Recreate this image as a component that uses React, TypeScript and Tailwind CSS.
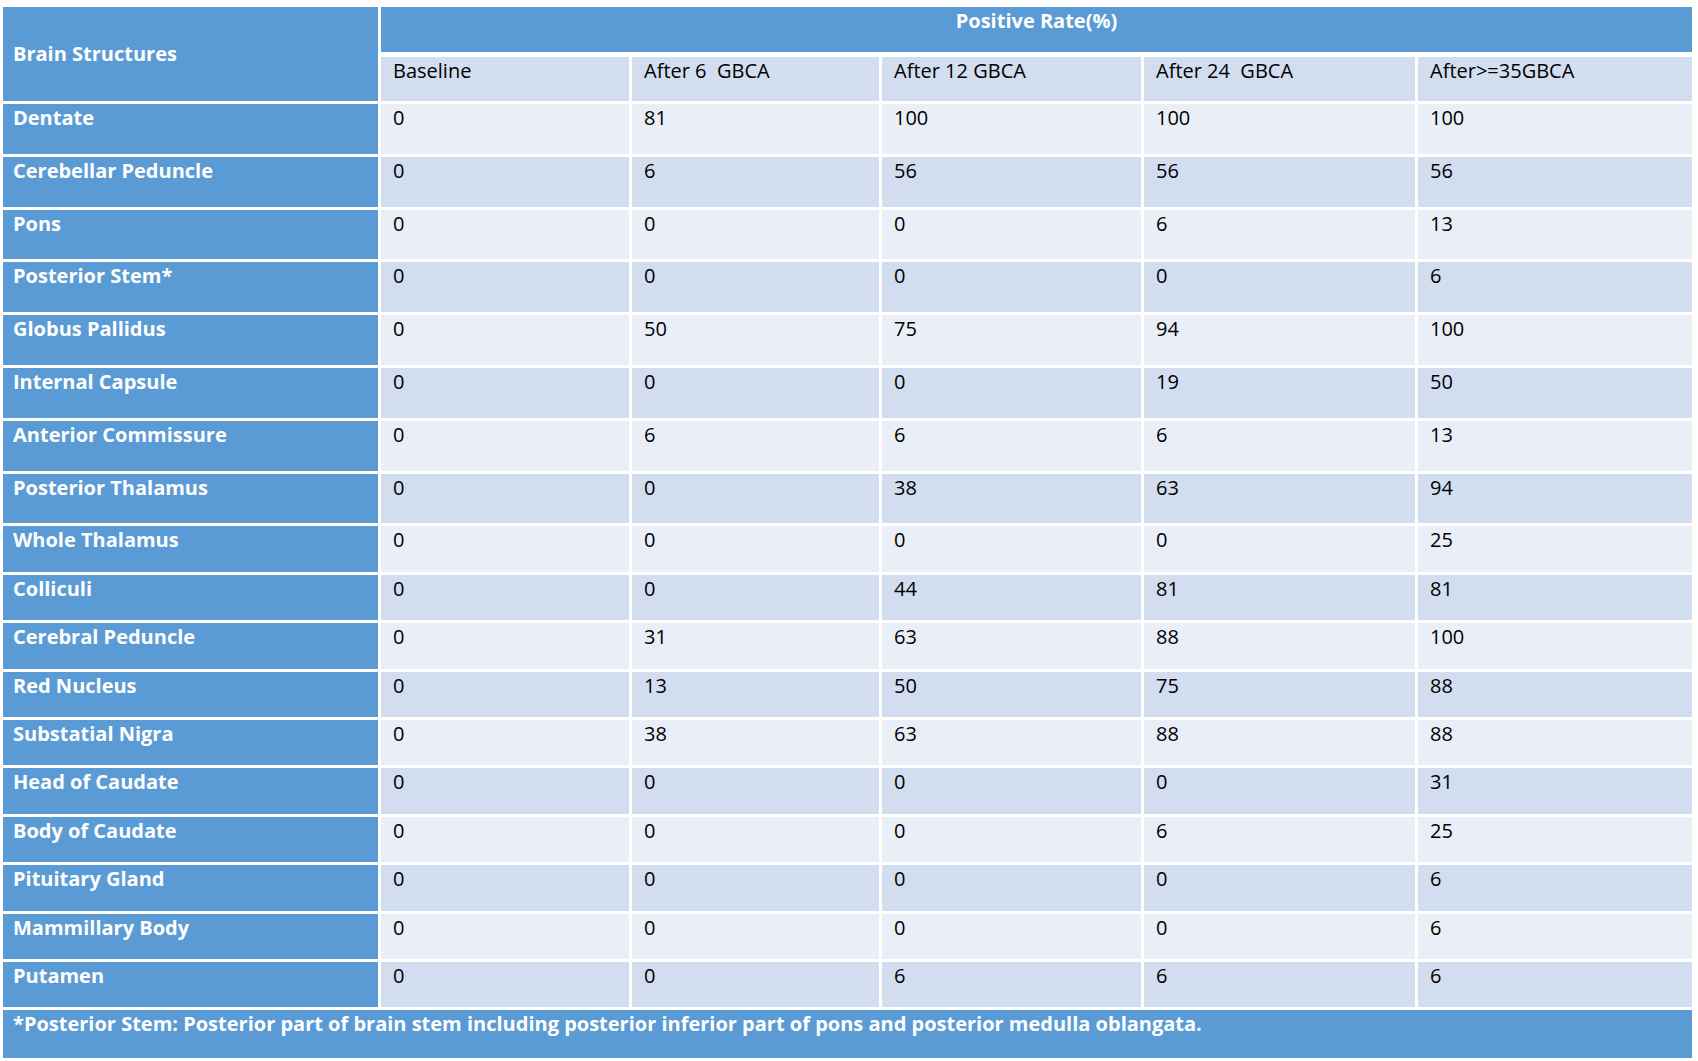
import React from 'react';

const rows: [string, string, string, string, string, string][] = [
  ['Dentate', '0', '81', '100', '100', '100'],
  ['Cerebellar Peduncle', '0', '6', '56', '56', '56'],
  ['Pons', '0', '0', '0', '6', '13'],
  ['Posterior Stem*', '0', '0', '0', '0', '6'],
  ['Globus Pallidus', '0', '50', '75', '94', '100'],
  ['Internal Capsule', '0', '0', '0', '19', '50'],
  ['Anterior Commissure', '0', '6', '6', '6', '13'],
  ['Posterior Thalamus', '0', '0', '38', '63', '94'],
  ['Whole Thalamus', '0', '0', '0', '0', '25'],
  ['Colliculi', '0', '0', '44', '81', '81'],
  ['Cerebral Peduncle', '0', '31', '63', '88', '100'],
  ['Red Nucleus', '0', '13', '50', '75', '88'],
  ['Substatial Nigra', '0', '38', '63', '88', '88'],
  ['Head of Caudate', '0', '0', '0', '0', '31'],
  ['Body of Caudate', '0', '0', '0', '6', '25'],
  ['Pituitary Gland', '0', '0', '0', '0', '6'],
  ['Mammillary Body', '0', '0', '0', '0', '6'],
  ['Putamen', '0', '0', '6', '6', '6'],
];

const columns = ['Baseline', 'After 6\u00a0 GBCA', 'After 12 GBCA', 'After 24\u00a0 GBCA', 'After>=35GBCA'];

const App: React.FC = () => {
  return (
    <div className="min-h-screen bg-white pt-[7px] pl-[3px] font-['Open_Sans',sans-serif] text-[20px] leading-[26px]">
      <div className="w-[1689px] flex flex-col gap-y-[3px]">
        {/* header */}
        <div className="grid grid-cols-[375px_1fr] gap-x-[3px]">
          <div className="bg-[#5b9bd5] h-[94px] flex items-center pl-[10px] font-bold text-white">
            Brain Structures
          </div>
          <div className="flex flex-col">
            <div className="bg-[#5b9bd5] h-[45px] pt-[1px] text-center font-bold text-white">Positive Rate(%)</div>
            <div className="mt-[5px] grid grid-cols-[248px_247px_259px_271px_1fr] gap-x-[3px]">
              {columns.map((c) => (
                <div key={c} className="bg-[#d2deef] h-[44px] pl-[12px] pt-[1px] text-black">
                  {c}
                </div>
              ))}
            </div>
          </div>
        </div>

        {/* data rows */}
        {rows.map((r, i) => {
          const shade = i % 2 === 0 ? 'bg-[#eaeff7]' : 'bg-[#d2deef]';
          const height = i < 8 ? 'h-[49.8px]' : 'h-[45.4px]';
          return (
            <div key={r[0]} className={`grid grid-cols-[375px_248px_247px_259px_271px_1fr] gap-x-[3px] ${height}`}>
              <div className="bg-[#5b9bd5] pl-[10px] pt-[1px] font-bold text-white">{r[0]}</div>
              {r.slice(1).map((v, j) => (
                <div key={j} className={`${shade} pl-[12px] pt-[1px] text-black`}>
                  {v}
                </div>
              ))}
            </div>
          );
        })}

        {/* footnote */}
        <div className="bg-[#5b9bd5] h-[48px] pl-[10px] pt-[1px] font-bold text-white">
          *Posterior Stem: Posterior part of brain stem including posterior inferior part of pons and posterior medulla oblangata.
        </div>
      </div>
    </div>
  );
};

export default App;
